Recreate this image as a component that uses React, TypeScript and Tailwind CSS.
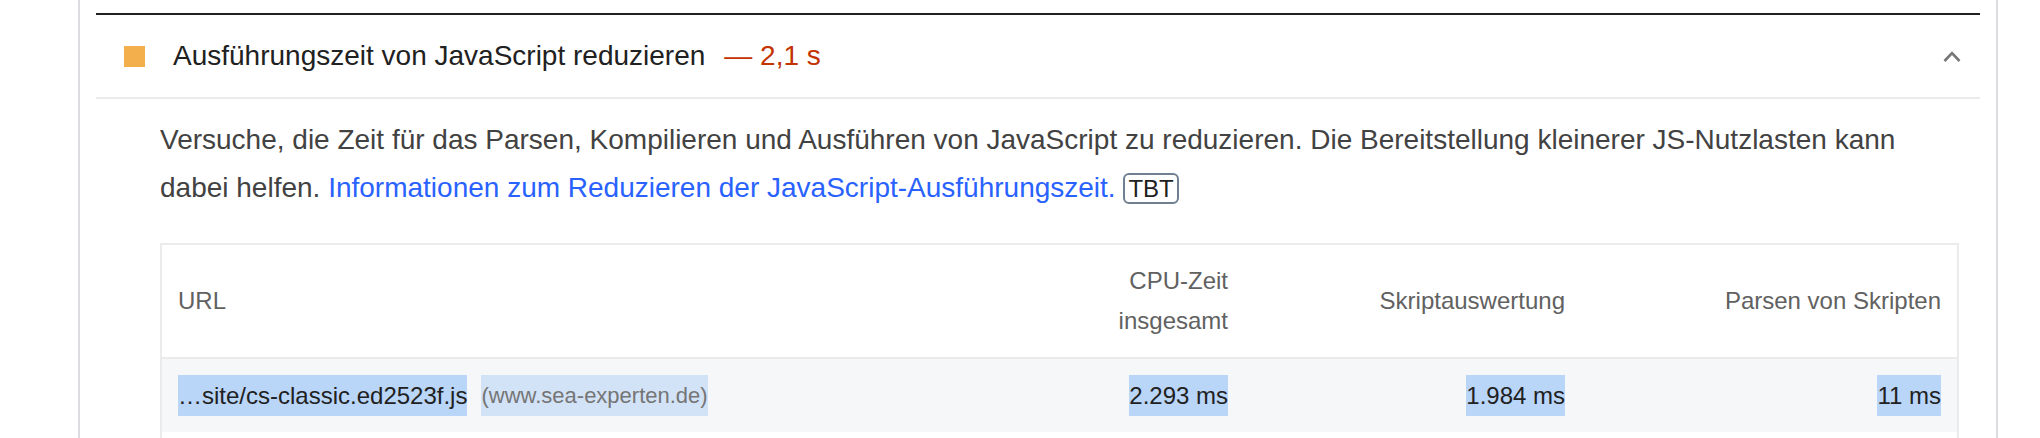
import React from "react";

export default function App() {
  const font = { fontFamily: '"Liberation Sans", Arial, Helvetica, sans-serif' };
  return (
    <div className="w-[2040px] h-[438px] overflow-hidden bg-white" style={font}>
      <div className="ml-[78px] w-[1920px] min-h-[438px] border-x-2 border-[#dcdce0] px-[16px] pt-[13px]">
        {/* audit group top line */}
        <div className="border-t-2 border-[#212121]" />
        {/* audit header */}
        <div className="h-[82px] flex items-center border-b-2 border-[#ebebeb] pl-[28px] box-content">
          <div className="w-[21px] h-[21px] bg-[#f4af4d] shrink-0" />
          <div className="ml-[28px] text-[28px] leading-[40px] text-[#212121] whitespace-nowrap">
            <span>Ausführungszeit von JavaScript reduzieren</span>
            <span className="ml-[19px] text-[#c33300]">— 2,1 s</span>
          </div>
          <div className="ml-auto mr-[19px] flex items-center">
            <svg width="18" height="11" viewBox="0 0 18 11" fill="none">
              <polyline
                points="1.5,10 9,2.2 16.5,10"
                stroke="#757575"
                strokeWidth="2.6"
                strokeLinecap="butt"
                strokeLinejoin="miter"
              />
            </svg>
          </div>
        </div>
        {/* audit body */}
        <div className="pl-[64px]">
          <p className="pt-[17px] w-[1740px] text-[28px] leading-[48px] text-[#424242]">
            Versuche, die Zeit für das Parsen, Kompilieren und Ausführen von JavaScript zu reduzieren. Die Bereitstellung kleinerer JS-Nutzlasten kann dabei helfen.{" "}
            <a className="text-[#2962ff]">Informationen zum Reduzieren der JavaScript-Ausführungszeit.</a>{" "}
            <span className="inline-block align-baseline border-2 border-[#708090] rounded-[6px] px-[3px] text-[24px] leading-[27px] text-[#212121]">
              TBT
            </span>
          </p>
          <div className="mt-[31px] mr-[21px] border-2 border-b-0 border-[#ebebeb]">
            <div className="grid grid-cols-[1fr_160px_337px_376px] text-[24px] leading-[40px] text-[#616161] border-b-2 border-[#ebebeb]">
              <div className="px-[16px] py-[16px] flex items-center">URL</div>
              <div className="px-[16px] py-[16px] flex items-center justify-end text-right">
                <span>
                  CPU-Zeit
                  <br />
                  insgesamt
                </span>
              </div>
              <div className="px-[16px] py-[16px] flex items-center justify-end text-right">Skriptauswertung</div>
              <div className="px-[16px] py-[16px] flex items-center justify-end text-right">Parsen von Skripten</div>
            </div>
            <div className="grid grid-cols-[1fr_160px_337px_376px] bg-[#f6f7f9] text-[24px] text-[#212121] h-[73px]">
              <div className="px-[16px] flex items-center whitespace-nowrap">
                <span className="inline-block h-[41px] leading-[41px] bg-[#b9d5f8]">…site/cs-classic.ed2523f.js</span>
                <span className="inline-block ml-[14px] h-[41px] leading-[41px] bg-[#d3e3f7] text-[22px] text-[#757575]">
                  (www.sea-experten.de)
                </span>
              </div>
              <div className="px-[16px] flex items-center justify-end">
                <span className="inline-block h-[41px] leading-[41px] bg-[#b9d5f8]">2.293 ms</span>
              </div>
              <div className="px-[16px] flex items-center justify-end">
                <span className="inline-block h-[41px] leading-[41px] bg-[#b9d5f8]">1.984 ms</span>
              </div>
              <div className="px-[16px] flex items-center justify-end">
                <span className="inline-block h-[41px] leading-[41px] bg-[#b9d5f8]">11 ms</span>
              </div>
            </div>
            <div className="h-[73px] bg-white" />
          </div>
        </div>
      </div>
    </div>
  );
}
